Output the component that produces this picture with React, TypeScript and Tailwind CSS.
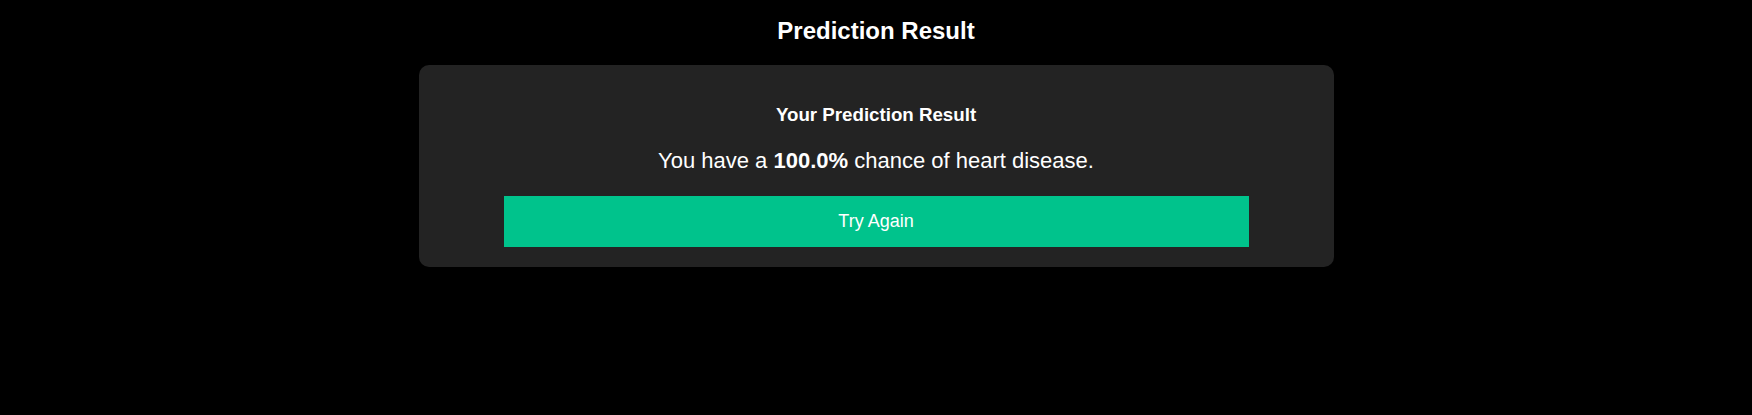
import React from 'react';

const App = () => {
  const chance = 100.0;

  return (
    <div className="min-h-screen bg-black text-white font-['Liberation_Sans',Arial,sans-serif]">
      <div className="flex flex-col items-center pt-[17px]">
        {/* Page title */}
        <h1 className="text-[24px] leading-[28px] font-bold">Prediction Result</h1>

        {/* Result card */}
        <div className="mt-[20px] w-[915px] rounded-[10px] bg-[#232323] pt-[39px] pb-[20px] flex flex-col items-center">
          <h3 className="text-[18.72px] leading-[21px] font-bold">Your Prediction Result</h3>
          <p className="mt-[23px] text-[22px] leading-[25px]">
            You have a <strong className="font-bold">{chance.toFixed(1)}%</strong> chance of heart disease.
          </p>
          <button
            type="button"
            className="mt-[23px] w-[745px] h-[51px] bg-[#00c38c] text-white text-[18px] flex items-center justify-center"
          >
            Try Again
          </button>
        </div>
      </div>
    </div>
  );
};

export default App;
